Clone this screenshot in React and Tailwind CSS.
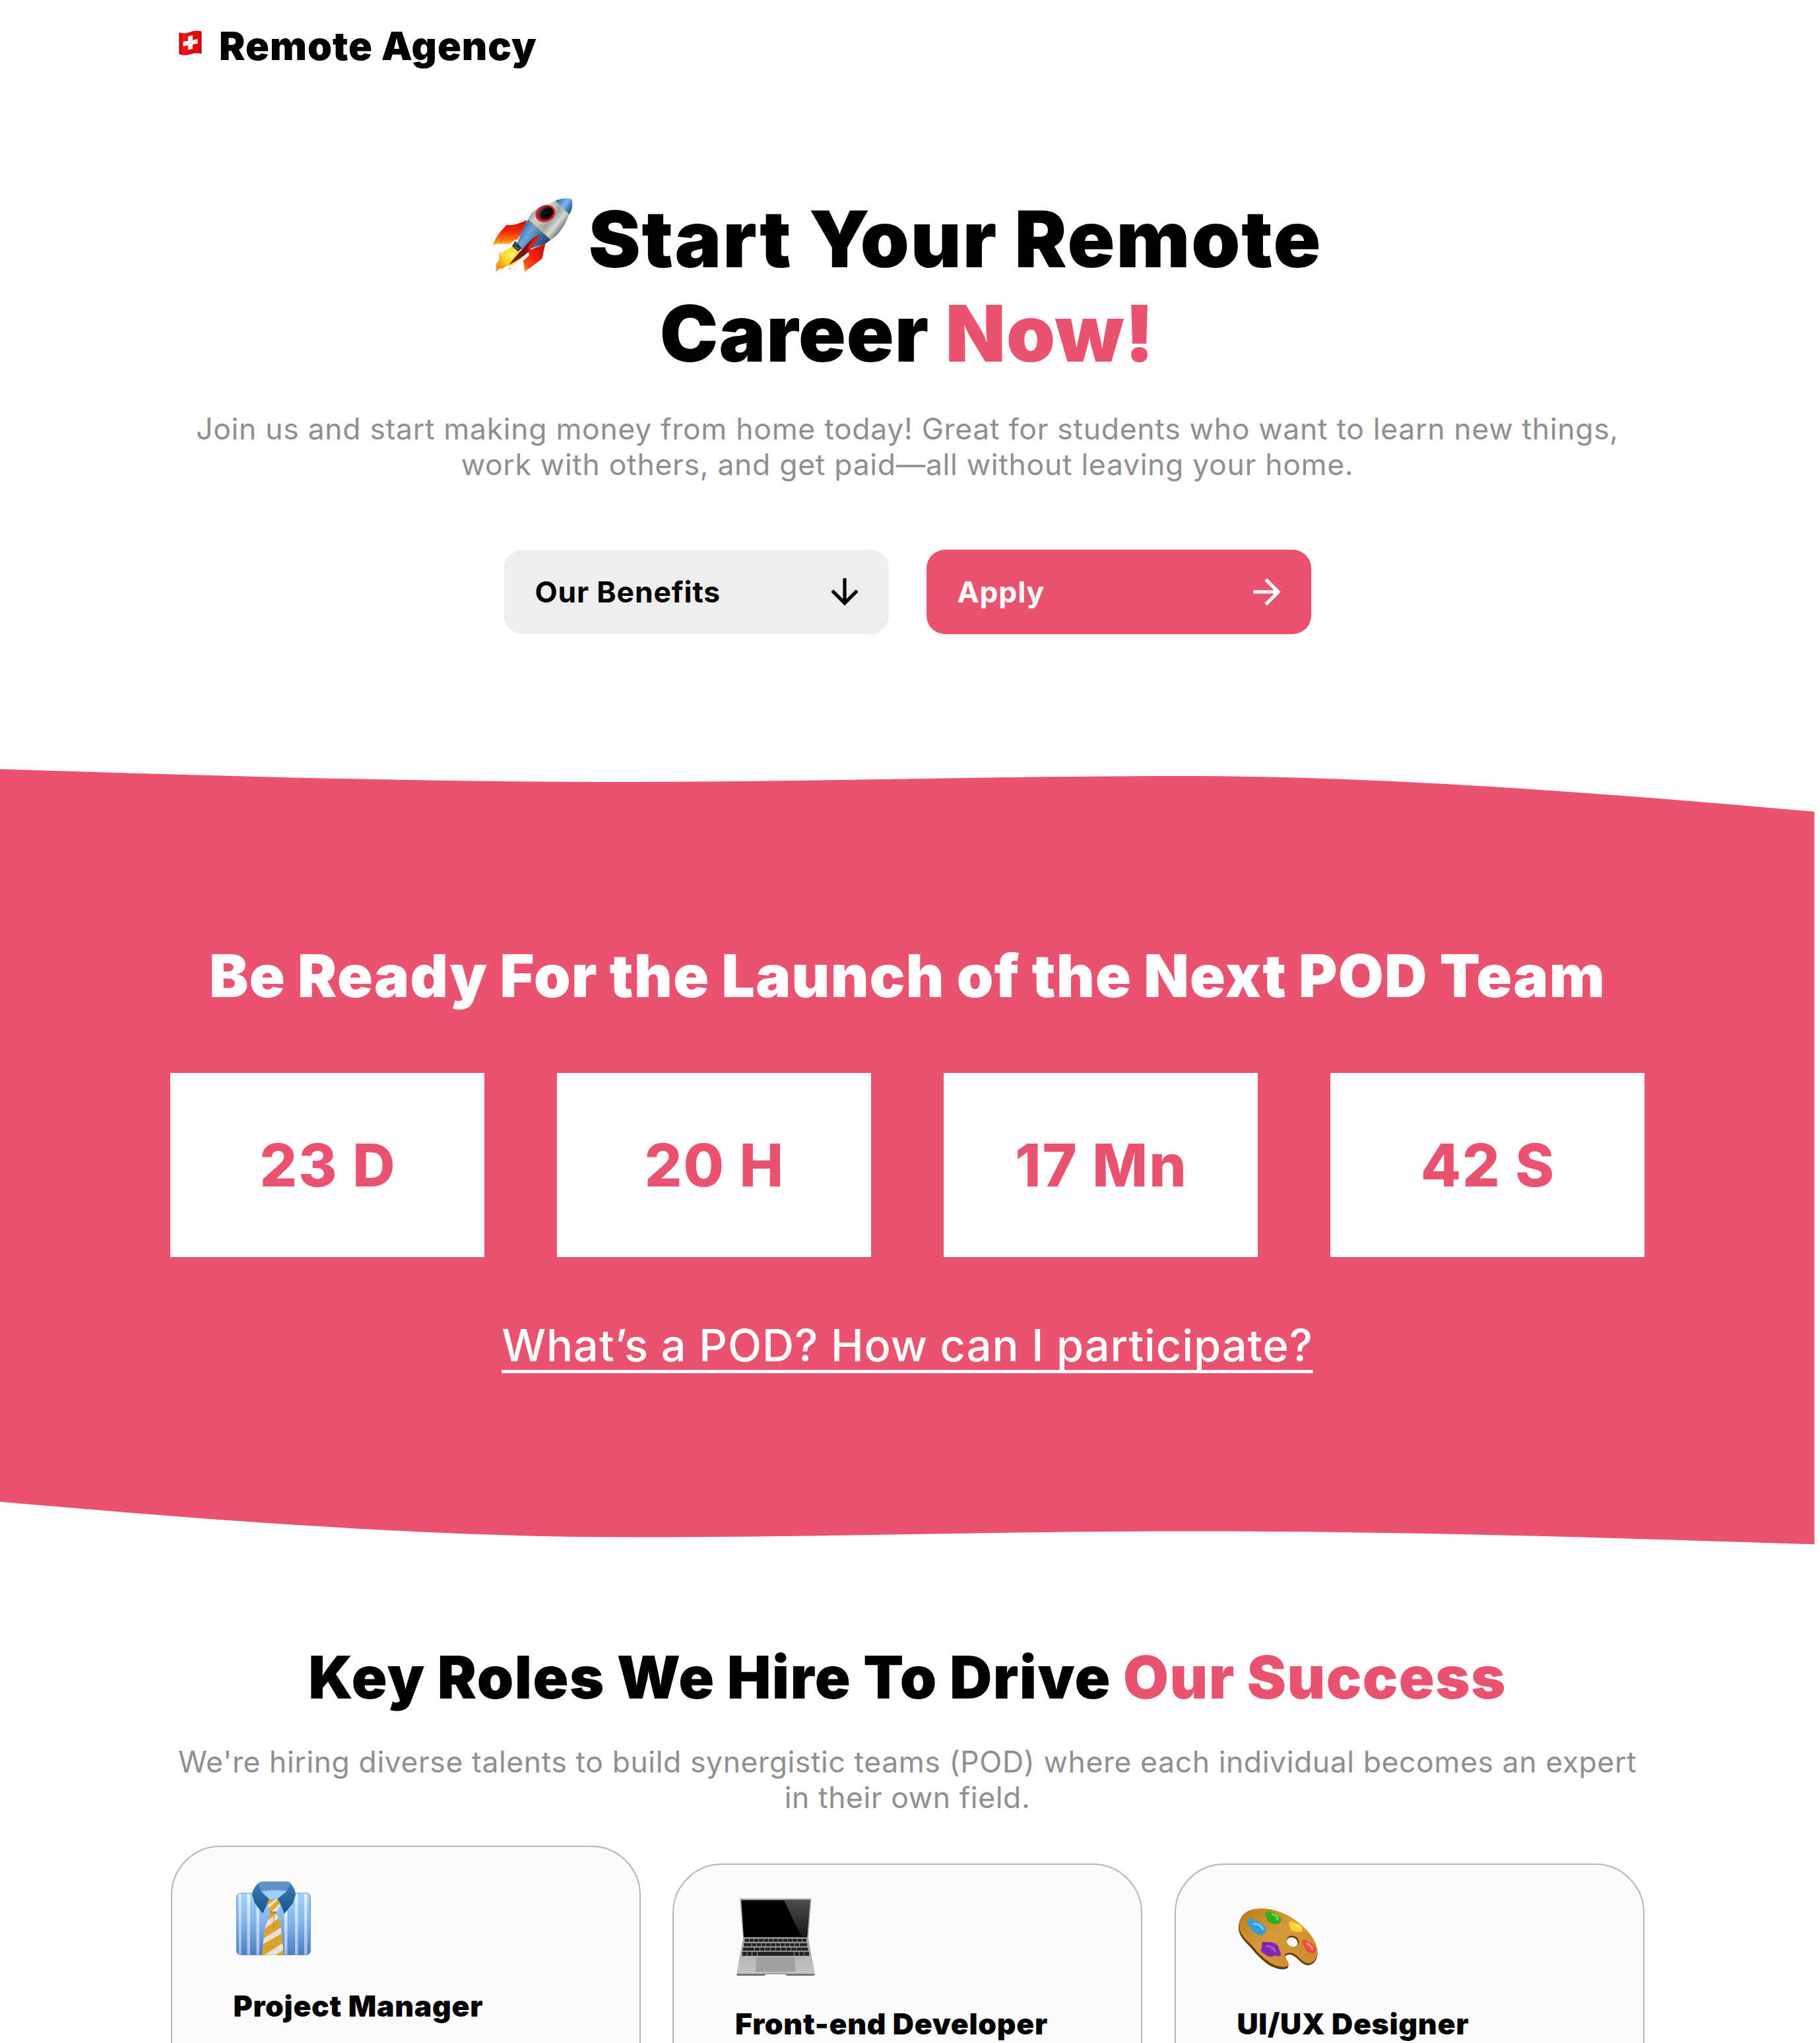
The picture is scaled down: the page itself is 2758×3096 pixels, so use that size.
function SwissFlag() {
  return (
    <svg className="mt-[12px] h-[38px] w-[35px] shrink-0" viewBox="0 0 35 38">
      <defs>
        <linearGradient id="flag" x1="0" y1="0" x2="1" y2="0">
          <stop offset="0" stopColor="#c8000b" />
          <stop offset=".2" stopColor="#f01a1c" />
          <stop offset=".55" stopColor="#d9060c" />
          <stop offset=".85" stopColor="#e90a0d" />
          <stop offset="1" stopColor="#c00007" />
        </linearGradient>
      </defs>
      <path d="M.3 3.2C6 5.4 12 4.6 18 2.4 23 .6 29-.2 34.5 2V35.2C29 33.5 23 34.1 17 36 11 37.9 5 37.8.3 35.5Z" fill="url(#flag)" />
      <path d="M.3 3.2C6 5.4 12 4.6 18 2.4 23 .6 29-.2 34.5 2" fill="none" stroke="#8f1a1a" strokeOpacity=".5" strokeWidth="1" />
      <path d="M.3 35.5C5 37.8 11 37.9 17 36 23 34.1 29 33.5 34.5 35.2" fill="none" stroke="#7f0a0a" strokeOpacity=".6" strokeWidth="1" />
      <path d="M13.8 9.1 21 7.6V14.5L28.5 13.3V20.1L21 21.6V28.2L13.8 29.5V22.8L6.6 23.9V17L13.8 15.9Z" fill="#f1f0f0" />
    </svg>
  );
}

function Rocket() {
  return (
    <svg className="mt-[9px] h-[113px] w-[121px] shrink-0" viewBox="0 0 121 113">
      <defs>
        <linearGradient id="rkBody" gradientUnits="userSpaceOnUse" x1="62" y1="14" x2="104" y2="48">
          <stop offset="0" stopColor="#8b9494" />
          <stop offset=".25" stopColor="#d3d8d6" />
          <stop offset=".6" stopColor="#9da5a2" />
          <stop offset=".8" stopColor="#d9dcd6" />
          <stop offset="1" stopColor="#6f7877" />
        </linearGradient>
        <linearGradient id="rkBlue" gradientUnits="userSpaceOnUse" x1="42" y1="44" x2="84" y2="72">
          <stop offset="0" stopColor="#2f6296" />
          <stop offset=".3" stopColor="#6ea6da" />
          <stop offset=".6" stopColor="#3b74ab" />
          <stop offset="1" stopColor="#173a5e" />
        </linearGradient>
        <linearGradient id="rkNose" gradientUnits="userSpaceOnUse" x1="98" y1="2" x2="120" y2="18">
          <stop offset="0" stopColor="#2f6db4" />
          <stop offset=".5" stopColor="#7db8ee" />
          <stop offset="1" stopColor="#1f4f8c" />
        </linearGradient>
        <linearGradient id="rkFin" x1="0" y1="0" x2="0" y2="1">
          <stop offset="0" stopColor="#c8130a" />
          <stop offset=".45" stopColor="#f5240c" />
          <stop offset=".8" stopColor="#f8760f" />
          <stop offset="1" stopColor="#ffc320" />
        </linearGradient>
        <linearGradient id="rkFin2" x1="1" y1="0" x2="0" y2="1">
          <stop offset="0" stopColor="#b80e08" />
          <stop offset=".5" stopColor="#f5200b" />
          <stop offset=".8" stopColor="#f4500e" />
          <stop offset="1" stopColor="#ffc320" />
        </linearGradient>
        <radialGradient id="rkFlame" cx=".6" cy=".35" r=".7">
          <stop offset="0" stopColor="#fff36a" />
          <stop offset=".5" stopColor="#ffd21c" />
          <stop offset="1" stopColor="#f5811a" />
        </radialGradient>
        <radialGradient id="rkWin" cx=".65" cy=".7" r=".8">
          <stop offset="0" stopColor="#000" />
          <stop offset=".6" stopColor="#0b0d0e" />
          <stop offset="1" stopColor="#5d6a70" />
        </radialGradient>
      </defs>
      <path d="M21 41C32 42 42 38 51 33L49 44 37 63 32 64 25 70C17 69 8 69 0 71 4 60 12 49 21 41Z" fill="url(#rkFin)" />
      <path d="M21 41 11 70" stroke="#a51208" strokeOpacity=".5" strokeWidth=".8" />
      <path d="M30 73 24 77 17 80 12 88 8 95 6 103 4 112 10 107 15 107 21 103 29 102 35 98 42 93 46 86 43 79Z" fill="url(#rkFlame)" />
      <path d="M10 91l1-5M6 99l-1 5M25 106l1 2M13 83l-3 2" stroke="#f08a1c" strokeWidth="1.5" strokeLinecap="round" />
      <path d="M79.5 69 74.5 92 48 112 46 95 55 87 53 80Z" fill="url(#rkFin2)" />
      <path d="M53.5 32 88 63 80 69 56 77 42 78 36 70C41 58 46 44 53.5 32Z" fill="url(#rkBlue)" />
      <path d="M94 4.5C83 9 70 14 62 20 57 24 55 28 53.5 32L88 63C96 59 104 48 108 41 112 34 114 29 115 25Z" fill="url(#rkBody)" />
      <path d="M94 4.5C102 1 112-.5 119 1.5 122 9 120 18 115.5 25Z" fill="url(#rkNose)" />
      <path d="M53.5 32 88 63" stroke="#d8b94b" strokeWidth="1.4" />
      <path d="M94 4.5 115.5 25" stroke="#c8b568" strokeWidth="1" />
      <ellipse cx="79.5" cy="23.5" rx="15.3" ry="12.6" transform="rotate(-24 79.5 23.5)" fill="#e3161b" />
      <ellipse cx="80" cy="22.8" rx="11.8" ry="9.6" transform="rotate(-24 80 22.8)" fill="url(#rkWin)" />
      <g fill="#e9ecea" stroke="#7b8381" strokeWidth=".4">
        <circle cx="95" cy="8.5" r="1.2" /><circle cx="103.5" cy="17" r="1.2" /><circle cx="110" cy="24" r="1.2" />
        <circle cx="57" cy="31" r="1.2" /><circle cx="62.5" cy="35.5" r="1.2" /><circle cx="74" cy="46" r="1.2" />
      </g>
      <path d="M34 65 29 73 38 81 43.5 76 38 70Z" fill="#27343e" />
      <path d="M36 67l-3 6 6 5" fill="none" stroke="#6e7d88" strokeWidth="1.2" />
      <path d="M70 55.5C62 60 53 67 46 76 38 84 31 93 24.5 101 36 95 50 87 56 79 60 72 66 64 71 58Z" fill="#7d120b" />
      <path d="M70 55.5C64 60 58 66 55 71L51 82C58 76 66 66 71 58Z" fill="#ee1a10" />
    </svg>
  );
}

function ShirtTie() {
  return (
    <svg className="h-[112px] w-[113px]" viewBox="0 0 113 112">
      <defs>
        <linearGradient id="shBody" x1="0" y1="0" x2="0" y2="1">
          <stop offset="0" stopColor="#a4d2fb" />
          <stop offset=".5" stopColor="#7fb1e8" />
          <stop offset="1" stopColor="#477fbf" />
        </linearGradient>
        <linearGradient id="shStripe" x1="0" y1="0" x2="0" y2="1">
          <stop offset="0" stopColor="#e2f5ff" />
          <stop offset="1" stopColor="#a9b8ee" />
        </linearGradient>
        <linearGradient id="shCollar" x1="0" y1="0" x2="0" y2="1">
          <stop offset="0" stopColor="#3f7cb4" />
          <stop offset="1" stopColor="#17548f" />
        </linearGradient>
        <clipPath id="tieClip">
          <path d="M52 46.5H60.5L67 63 72 111.5H39L43 72Z" />
        </clipPath>
      </defs>
      <rect x=".5" y="18" width="112" height="93.5" rx="6" fill="url(#shBody)" stroke="#6d92cf" />
      <g fill="url(#shStripe)">
        <rect x="4" y="19" width="3.5" height="92" /><rect x="16.5" y="19" width="4.5" height="92" />
        <rect x="30.5" y="19" width="4.5" height="92" /><rect x="73" y="45" width="4.5" height="66" />
        <rect x="89" y="19" width="4.5" height="92" /><rect x="103" y="19" width="4.5" height="92" />
      </g>
      <path d="M33 4C34 1 37 .3 40 .3H75C79 .3 82 1 83 4L88 16 76 28H38L27 16Z" fill="#5c93c6" />
      <path d="M37 15C50 13 63 13 77 15L62 30H48Z" fill="#9dd0f8" />
      <path d="M33 3C28 8 24 15 24 21L28 33 40 49 47.5 33 50.5 27.5 38 15.5Z" fill="url(#shCollar)" />
      <path d="M82 3C87 8 90 15 90 21L86 33 73 49 66.5 33 61.5 27.5 76 15.5Z" fill="url(#shCollar)" />
      <g clipPath="url(#tieClip)">
        <rect x="36" y="46" width="40" height="67" fill="#dca42f" />
        <path d="M38 66 70 43V51L38 76ZM36 90 74 66V76L36 98ZM36 116 76 90V101L44 122Z" fill="#e6e1da" />
        <path d="M57 48V70" stroke="#a9741b" strokeOpacity=".4" strokeWidth="2" />
      </g>
      <path d="M48.5 29Q56.5 24 64.5 29L66.5 36 60.5 46.5H52L47 37Z" fill="#e0a92f" />
      <path d="M48 36 60 26.5 63 28 49 41ZM53 46.5 66 34V38L60.5 46.5Z" fill="#ebe5da" />
      <path d="M51.5 46.5H61" stroke="#7d5513" strokeWidth="1" />
    </svg>
  );
}

const keyRows = [
  { y: 61, h: 4.7, x: 12, w: 94.6, keys: [1, 1, 1, 1, 1, 1, 1, 1, 1, 1, 1, 1, 1] },
  { y: 67.7, h: 4.8, x: 10.7, w: 97, keys: [1.7, 1, 1, 1, 1, 1, 1, 1, 1, 1, 1, 1.7] },
  { y: 74.3, h: 4.9, x: 9.3, w: 99.7, keys: [2.3, 1, 1, 1, 1, 1, 1, 1, 1, 2.3] },
  { y: 80.7, h: 6.2, x: 8.2, w: 102.3, keys: [1, 1, 1, 7.2, 1, 1, 1] },
];

function Laptop() {
  return (
    <svg className="h-[117px] w-[119px]" viewBox="0 0 119 117">
      <defs>
        <linearGradient id="lpBase" x1="0" y1="0" x2="0" y2="1">
          <stop offset="0" stopColor="#a7a7a7" />
          <stop offset="1" stopColor="#c4c4c4" />
        </linearGradient>
        <linearGradient id="lpGlare" x1="0" y1="0" x2="0" y2="1">
          <stop offset="0" stopColor="#4d4d4d" />
          <stop offset="1" stopColor="#161616" />
        </linearGradient>
      </defs>
      <path d="M5 1.5Q5 0 7 0H111.5Q113.5 0 113.5 1.5L109 60H10Z" fill="#a9abab" />
      <path d="M7.3 2.4H111.5L107 58.7H11Z" fill="#000" />
      <path d="M72 2.4H111.5L107 58.7H98.5Z" fill="url(#lpGlare)" />
      <path d="M10 60H109L118.5 113V115.5Q118 117 116 117H77L74 114.5H45L42 117H3Q.5 117 .3 115.5V113Z" fill="url(#lpBase)" />
      <path d="M.5 114.3H42.5L45 113.5H74L77 114.3H118.5V115.5Q118 117 116 117H77L74 114.5H45L42 117H3Q.5 117 .5 115.5Z" fill="#6c6c6c" />
      {keyRows.map((row) => {
        const total = row.keys.reduce((a, b) => a + b, 0);
        let x = row.x;
        return row.keys.map((k, i) => {
          const w = (k / total) * row.w;
          const at = x;
          x += w;
          return <rect key={row.y + '-' + i} x={at + 0.4} y={row.y} width={w - 0.8} height={row.h} fill="#232323" />;
        });
      })}
      <path d="M30.5 88.7H88L89.5 111H29Z" fill="#a0a0a0" />
    </svg>
  );
}

function Palette() {
  return (
    <svg className="h-[93px] w-[121px]" viewBox="0 0 121 93">
      <defs>
        <linearGradient id="plWood" x1="0" y1="0" x2="1" y2="1">
          <stop offset="0" stopColor="#b97c18" />
          <stop offset=".45" stopColor="#d79a38" />
          <stop offset="1" stopColor="#c98a28" />
        </linearGradient>
      </defs>
      <path d="M0 30C0 15 8 2 30 1 62-1 90 18 106 38 116 50 121 62 119 73 117 82 110 87 103 86 93 84 88 71 78 70 70 70 70 74 73 79 76 84 77 88 73 91 68 94 57 92 46 86 32 76 24 66 17 58 8 49 0 40 0 30Z" fill="#6b3a0c" />
      <path d="M1 27C1 13 10 .5 32 .3 62-1 90 17 106 36 116 48 121 60 119 71 117 79 111 84 104 83 94 81 89 68 79 67.5 70 67 69 71 72 76 76 82 77 86 73 88 68 90 57 88 47 82 34 73 26 63 19 55 9 46 1 37 1 27Z" fill="url(#plWood)" />
      <ellipse cx="82" cy="49.5" rx="9.6" ry="7.6" transform="rotate(25 82 49.5)" fill="#5a2d0a" />
      <ellipse cx="81.3" cy="51" rx="8.6" ry="6.8" transform="rotate(25 81.3 51)" fill="#fcfcfc" />
      <path d="M41 7C42 4 46 4 48 6 53 5 56 8 59 11 64 13 66 17 64 20 61 24 55 25 52 23 46 22 43 19 43 16 40 13 40 10 41 7Z" fill="#2fae22" />
      <path d="M50 9Q60 10 59 18" stroke="#69dd4d" strokeWidth="3" fill="none" />
      <path d="M14 18C17 14 22 14 26 19 34 21 41 27 42 33 41 37 37 38 36 41 29 40 20 36 18 29 14 26 13 22 14 18Z" fill="#2c9fdc" />
      <path d="M22 23Q36 24 37 33" stroke="#7fcdf2" strokeWidth="3" fill="none" />
      <path d="M77 20C80 18 85 20 88 23 93 23 97 28 97 33 95 37 86 37 80 33 79 29 74 24 77 20Z" fill="#f8cf2c" />
      <path d="M84 25Q92 26 93 32" stroke="#ffe97a" strokeWidth="2.5" fill="none" />
      <path d="M35 52C38 49 42 52 45 51 52 51 60 54 61 60 61 64 65 67 64 71 61 74 56 70 53 72 50 75 46 72 43 72 41 69 36 68 35 66 31 63 36 61 35 58Z" fill="#8426b4" />
      <path d="M42 57Q54 57 55 66" stroke="#a856d4" strokeWidth="3" fill="none" />
      <path d="M96 49C98 46 103 47 106 51 112 53 117 58 118 64 117 69 110 68 105 66 100 63 101 57 97 54Z" fill="#f24a3d" />
      <path d="M103 53Q112 57 112 63" stroke="#ff9a8c" strokeWidth="2.5" fill="none" />
    </svg>
  );
}

const ArrowDown = () => (
  <svg className="size-[62px]" viewBox="0 0 24 24" fill="currentColor">
    <path d="m20 12-1.41-1.41L13 16.17V4h-2v12.17l-5.58-5.59L4 12l8 8 8-8z" />
  </svg>
);
const ArrowRight = () => (
  <svg className="size-[62px]" viewBox="0 0 24 24" fill="currentColor">
    <path d="m12 4-1.41 1.41L16.17 11H4v2h12.17l-5.58 5.59L12 20l8-8z" />
  </svg>
);

const countdown = ['23 D', '20 H', '17 Mn', '42 S'];
const roles = [
  { title: 'Project Manager', icon: <ShirtTie />, card: '', box: 'mt-[52px] h-[112px] pl-[4.5px]' },
  { title: 'Front-end Developer', icon: <Laptop />, card: 'mt-[27px]', box: 'mt-[51px] h-[113px] pl-[2px]' },
  { title: 'UI/UX Designer', icon: <Palette />, card: 'mt-[27px]', box: 'mt-[66px] h-[98px] pl-[2px]' },
];

export default function App() {
  return (
    <div className="h-[3096px] w-full overflow-hidden bg-white font-['Inter',sans-serif] text-black">
      <div className="w-[2750px]">
        <header className="flex items-start gap-[26px] px-[271px] pt-[34px]">
          <SwissFlag />
          <span className="text-[59.3px] leading-[72px] font-black tracking-[1px]">Remote Agency</span>
        </header>

        <section className="flex flex-col items-center pt-[185px]">
          <h1 className="flex flex-col items-center text-[118.6px] leading-[143px] font-black">
            <span className="flex items-start gap-[24px] tracking-[1.94px]">
              <Rocket />
              Start Your Remote
            </span>
            <span className="tracking-[1px]">
              Career <span className="text-[#E95370]">Now!</span>
            </span>
          </h1>
          <p className="mt-[46px] text-center text-[44.5px] leading-[54px] tracking-[0.69px] text-[#8f8f8f]">
            Join us and start making money from home today! Great for students who want to learn new things,
            <br />
            work with others, and get paid—all without leaving your home.
          </p>
          <div className="mt-[102px] flex gap-[57px] text-[44.5px] font-bold tracking-[0.8px]">
            <button className="flex h-[128px] w-[583px] items-center justify-between rounded-[28px] bg-[#eeeeee] pr-[36px] pl-[47px]">
              Our Benefits
              <ArrowDown />
            </button>
            <button className="flex h-[128px] w-[583px] items-center justify-between rounded-[28px] bg-[#E95370] pr-[36px] pl-[47px] text-white">
              Apply
              <ArrowRight />
            </button>
          </div>
        </section>

        <section className="relative mt-[204px] flex h-[1177px] flex-col items-center pt-[260px] text-white">
          <svg className="absolute inset-0 h-[1177px] w-[2750px]" viewBox="0 0 2750 1177" fill="#E95370">
            <path d="M0 .5C300 10 620 20 932 20 1250 20 1500 11 1791 11 2080 11 2400 34 2749.5 65V1175.3C2450 1165.5 2130 1155.5 1818 1155.5 1500 1155.5 1250 1164.5 959 1164.5 670 1164.5 350 1141.5 0 1110.7Z" />
          </svg>
          <h2 className="relative text-[89px] leading-[108px] font-black tracking-[1.3px] [word-spacing:-1px]">
            Be Ready For the Launch of the Next POD Team
          </h2>
          <div className="relative mt-[93px] flex gap-[110.7px]">
            {countdown.map((t) => (
              <div key={t} className="flex h-[279px] w-[475.3px] items-center justify-center bg-white pl-[2px] text-[89px] leading-[108px] font-extrabold tracking-[2px] text-[#E95370]">
                {t}
              </div>
            ))}
          </div>
          <a className="relative mt-[94px] text-[66.7px] leading-[80px] font-medium tracking-[0.93px] underline decoration-[5px] underline-offset-[13px] [text-decoration-skip-ink:none]">
            What’s a POD? How can I participate?
          </a>
        </section>

        <section className="flex flex-col items-center pt-[146px]">
          <h2 className="text-[89px] leading-[108px] font-black tracking-[1.4px] [word-spacing:-1px]">
            Key Roles We Hire To Drive <span className="text-[#E95370]">Our Success</span>
          </h2>
          <p className="mt-[47px] text-center text-[44.5px] leading-[54px] tracking-[0.58px] text-[#8f8f8f]">
            We're hiring diverse talents to build synergistic teams (POD) where each individual becomes an expert
            <br />
            in their own field.
          </p>
          <div className="mt-[46px] flex items-start gap-[48.5px]">
            {roles.map((r) => (
              <article key={r.title} className={'h-[600px] w-[712px] rounded-[75px] border-2 border-[#b5b5b5] bg-[#fcfcfc] pl-[93px] ' + r.card}>
                <div className={r.box}>{r.icon}</div>
                <h3 className="mt-[49.5px] text-[44.5px] leading-[54px] font-black tracking-[0.7px]">{r.title}</h3>
              </article>
            ))}
          </div>
        </section>
      </div>
    </div>
  );
}
